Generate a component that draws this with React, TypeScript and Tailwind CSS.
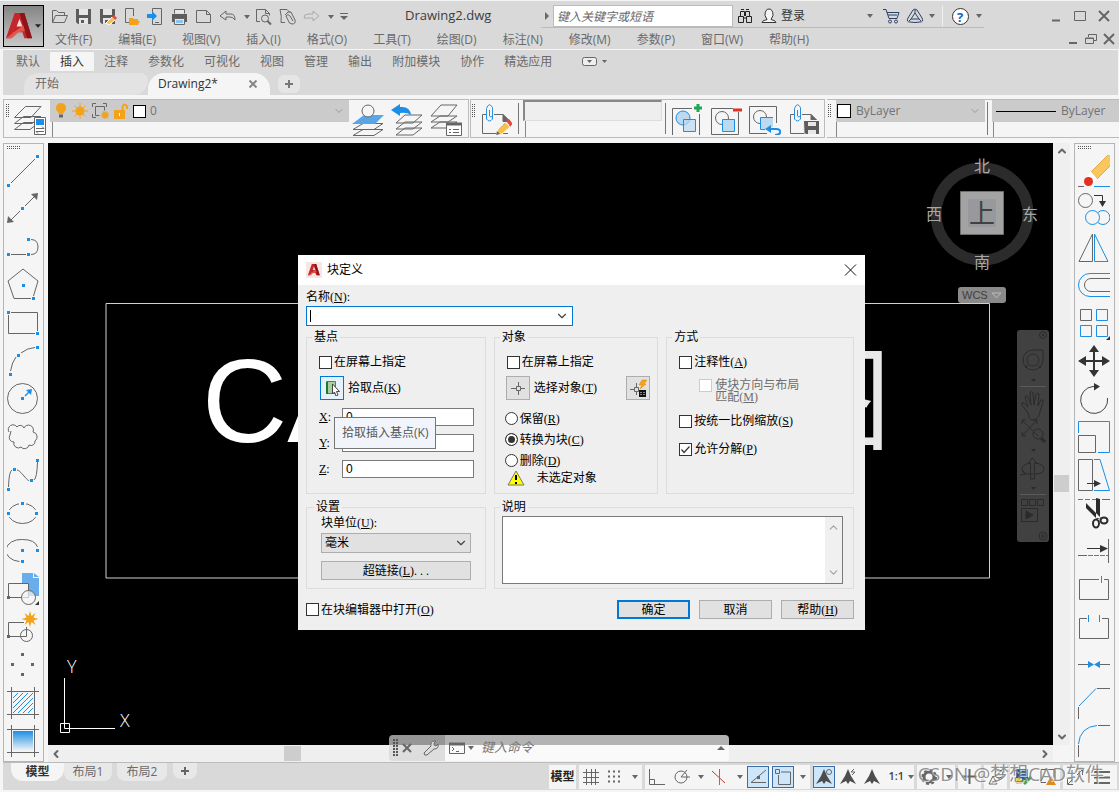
import type { ReactNode } from "react";
import { ChevronDown, ChevronLeft, ChevronRight, ChevronUp, X } from "lucide-react";

const GREY = "#666666";
const BLUE = "#1b8fe6";

type IconProps = { w?: number; h?: number; children: ReactNode; className?: string };

function Icon({ w = 32, h = 32, children, className }: IconProps) {
  return (
    <svg width={w} height={h} viewBox={`0 0 ${w} ${h}`} fill="none" stroke={GREY} className={`shrink-0 ${className ?? ""}`} aria-hidden="true">
      {children}
    </svg>
  );
}

function Dot({ x, y, c = BLUE }: { x: number; y: number; c?: string }) {
  return <rect x={x - 1} y={y - 1} width="3" height="3" fill={c} stroke="none" />;
}

function Caret() {
  return (
    <Icon w={7} h={4}>
      <path d="M1 0h6L4 4z" fill={GREY} stroke="none" />
    </Icon>
  );
}

function Grip({ vertical = false }: { vertical?: boolean }) {
  const cells = [0, 1, 2, 3, 4, 5, 6];
  return (
    <Icon w={vertical ? 4 : 14} h={vertical ? 14 : 4}>
      {cells.map((i) => (
        <g key={i} fill="#555" stroke="none">
          <rect x={vertical ? 0 : i * 2} y={vertical ? i * 2 : 0} width="1" height="1" />
          <rect x={vertical ? 2 : i * 2} y={vertical ? i * 2 : 2} width="1" height="1" />
        </g>
      ))}
    </Icon>
  );
}

function LogoA({ size }: { size: number }) {
  return (
    <svg width={size} height={size} viewBox="0 0 32 32" aria-hidden="true" className="shrink-0">
      <path d="M11 2h10l8 26h-8l-2-6-9 0-3 6H2z" fill="#c4262c" />
      <path d="M16 8l3 8h-6z" fill="#f6dcd8" />
      <path d="M2 28L21 14l3 6-9 2-7 6z" fill="#e2574c" />
      <path d="M16 2h5l8 26h-5z" fill="#8e1419" />
    </svg>
  );
}

/* quick access bar */

const floppy = (
  <>
    <path d="M1 1h15v15H3l-2-2z" fill="#5c5c5c" stroke="none" />
    <path d="M4 1h9v6H4zM4 10h9v6H4z" fill="#e6e6e6" stroke="none" />
    <path d="M6 12h3v3H6z" fill="#5c5c5c" stroke="none" />
  </>
);

const quick = [
  { name: "打开", art: <path d="M1.500 14.500V2.500h4l2 2h6v3M1.500 14.500l3-7h12l-3 7z" /> },
  { name: "保存", art: floppy },
  { name: "另存为", art: <>{floppy}<path d="M7 15l6-6 3 3-6 5z" fill="#f7c04e" stroke="#fff" /><path d="M13 9l2-2 3 3-2 2z" fill="#e5483c" stroke="none" /></> },
  { name: "从移动设备打开", art: <><path d="M10.500 8V.5h-8v14h4" /><path d="M6 17V10h4l1 1h4v2h2l-2 4z" fill="#f5a21b" stroke="none" /></> },
  { name: "保存到移动设备", art: <><path d="M5.500 5V.5h9v16h-9v-5M8 14.500h4" /><path d="M0 6h5V3l5 5-5 5v-3H0z" fill={BLUE} stroke="none" /></> },
  { name: "打印", art: <><path d="M1 6h15v8H1z" fill="#5c5c5c" stroke="none" /><path d="M3.500 5.500v-4h10v4M3.500 10.500h10v6h-10z" fill="#e8e8e8" /><path d="M5 12h7v3H5z" fill="#8cc4ef" stroke="none" /></> },
  { name: "新建", art: <path d="M1.500 2.500h10l4 4v8h-14zM11.500 2.500v4h4" /> },
  { name: "放弃", art: <path d="M1 8l6-5v3h5q4 0 4 6-2-3-5-3H7v3z" /> },
];

const quickMore = [
  { name: "打印预览", art: <><path d="M5 13.500H1.500v-12h9l4 4v2M10.500 1.500v4h4" /><circle cx="10" cy="10.500" r="3.500" /><path d="M12.500 13l3.500 3.500" strokeWidth="2" /></> },
  { name: "发布", art: <><path d="M6 14.500H2q1-6-1-13h7l3 3" /><path d="M6 7l3-3q4-1 4 2l3 6q1 4-3 4-3 0-4-4L7 8q2-3 4 0l3 5" /></> },
];

const menus = ["文件(F)", "编辑(E)", "视图(V)", "插入(I)", "格式(O)", "工具(T)", "绘图(D)", "标注(N)", "修改(M)", "参数(P)", "窗口(W)", "帮助(H)"];

function Header() {
  return (
    <header className="mt-px flex h-12 items-stretch bg-[#d9d9d9] pr-px">
      <button type="button" aria-label="应用程序菜单" className="mt-1 ml-[3px] flex h-[42px] w-[41px] shrink-0 items-center justify-between border border-black bg-linear-to-b from-[#858585] to-[#c8c8c8] pr-0.5">
        <LogoA size={31} />
        <svg width="7" height="4" viewBox="0 0 7 4" aria-hidden="true"><path d="M0 0h7L3.500 4z" fill="#222" /></svg>
      </button>
      <div className="flex min-w-0 flex-1 flex-col">
        <div className="flex h-[27px] items-center">
          <div className="ml-1 flex items-center pt-1">
            {quick.map((q) => (
              <button key={q.name} type="button" aria-label={q.name} className="grid w-6 place-items-center">
                <Icon w={18} h={18}>{q.art}</Icon>
              </button>
            ))}
            <span className="grid w-3 place-items-center"><Caret /></span>
            {quickMore.map((q) => (
              <button key={q.name} type="button" aria-label={q.name} className="grid w-6 place-items-center">
                <Icon w={18} h={18}>{q.art}</Icon>
              </button>
            ))}
            <button type="button" aria-label="重做" disabled className="grid w-6 place-items-center">
              <Icon w={18} h={18}><path d="M16 8l-6-5v3H5Q1 6 1 10h9v3z" stroke="#aaa" /></Icon>
            </button>
            <span className="grid w-3 place-items-center"><Caret /></span>
            <span className="grid w-4 place-items-center">
              <Icon w={8} h={7}><path d="M0 .5h8" /><path d="M0 3h8L4 7z" fill={GREY} stroke="none" /></Icon>
            </span>
          </div>
          <span className="ml-[53px] w-[136px] pt-0.5 text-[13px] text-[#3d3d3d]">Drawing2.dwg</span>
          <div className="flex h-full items-center border-b border-[#bbb] pt-1">
            <span className="grid w-3 place-items-center">
              <Icon w={4} h={8}><path d="M0 0v8l4-4z" fill={GREY} stroke="none" /></Icon>
            </span>
            <input aria-label="搜索" placeholder="键入关键字或短语" className="h-[22px] w-[180px] border border-[#bbb] bg-white px-[3px] text-xs italic outline-none placeholder:text-[#666]" />
            <button type="button" aria-label="查找" className="grid w-6 place-items-center">
              <Icon w={16} h={16}><path d="M1.500 8.500h5v6h-5zM9.500 8.500h5v6h-5zM3.500 8V3.500h4V8M8.500 8V3.500h4V8M4 1.500h3M9 1.500h3M6.500 10h3" stroke="#222" /></Icon>
            </button>
            <button type="button" className="flex items-center text-xs text-[#333]">
              <span className="grid w-6 place-items-center">
                <Icon w={16} h={16}><path d="M1 14.500q0-2 5-3l-2-4Q4 1 8 1t4 6.500l-2 4q5 1 5 3z" stroke="#333" fill="#f4f4f4" /></Icon>
              </span>
              登录
            </button>
            <span className="ml-14 grid w-4 place-items-center"><Caret /></span>
            <button type="button" aria-label="应用商店" className="grid w-7 place-items-center">
              <Icon w={18} h={16}><path d="M1 1.500h3l3 9h8l2-6H5M6 7h9" stroke="#2f3f66" /><circle cx="8" cy="13.500" r="1.500" stroke="#2f3f66" /><circle cx="14" cy="13.500" r="1.500" stroke="#2f3f66" /></Icon>
            </button>
            <button type="button" aria-label="保持连接" className="grid w-5 place-items-center">
              <Icon w={18} h={16}><path d="M7 2q2-2 4 0l5 8q2 4-2 4-5 1-10 0-4 0-2-4z" stroke="#2f3f66" /><path d="M9 5l4 6H5z" stroke="#2f3f66" /><path d="M9 2v3M3 13l2-2M15 13l-2-2" stroke="#2f3f66" /></Icon>
            </button>
            <span className="grid w-3 place-items-center"><Caret /></span>
            <span className="mx-[5px] h-5 w-px bg-[#f0f0f0]" />
            <button type="button" aria-label="帮助" className="grid w-6 place-items-center">
              <span className="grid size-[17px] place-items-center rounded-full border border-[#333] bg-white text-[13px] leading-4 font-bold text-[#1663b5]">?</span>
            </button>
            <span className="grid w-3 place-items-center"><Caret /></span>
          </div>
          <div className="ml-auto flex items-center pt-0.5 pr-0.5">
            <button type="button" aria-label="最小化" className="grid w-6 place-items-center"><Icon w={12} h={12}><path d="M2 10.500h8" strokeWidth="2" /></Icon></button>
            <button type="button" aria-label="最大化" className="grid w-6 place-items-center"><Icon w={12} h={12}><path d="M.5 1.500h11v9H.5z" /></Icon></button>
            <button type="button" aria-label="关闭" className="grid w-6 place-items-center"><Icon w={12} h={12}><path d="M1 1l10 10M11 1L1 11" strokeWidth="2" /></Icon></button>
          </div>
        </div>
        <nav className="flex h-[21px] items-center gap-0.5 text-xs text-[#6a6a6a]">
          {menus.map((m) => (
            <button key={m} type="button" className="px-3 pt-0.5 leading-5 whitespace-nowrap first:pl-[11px]">{m}</button>
          ))}
          <div className="ml-auto flex">
            <button type="button" aria-label="最小化图形" className="grid w-[18px] place-items-center"><Icon w={12} h={12}><path d="M2 10h8" strokeWidth="2" /></Icon></button>
            <button type="button" aria-label="还原图形" className="grid w-[18px] place-items-center"><Icon w={12} h={12}><path d="M3.500 4V1.500h8v6H9M.5 5h8v5.500h-8zM.5 5.500h8" /></Icon></button>
            <button type="button" aria-label="关闭图形" className="grid w-[18px] place-items-center"><Icon w={12} h={12}><path d="M1 1l10 10M11 1L1 11" strokeWidth="2" /></Icon></button>
          </div>
        </nav>
      </div>
    </header>
  );
}

const ribbonTabs = ["默认", "插入", "注释", "参数化", "可视化", "视图", "管理", "输出", "附加模块", "协作", "精选应用"];

function Ribbon() {
  return (
    <section className="mt-px mr-px ml-[3px] bg-[#d9d9d9] pt-px text-xs text-[#6a6a6a]">
      <div className="flex h-[21px] items-center pl-[3px]">
        {ribbonTabs.map((t) => (
          <button key={t} type="button" className={`h-[19px] px-2.5 leading-[19px] whitespace-nowrap ${t === "插入" ? "bg-[#f5f5f5] text-[#333]" : ""}`}>{t}</button>
        ))}
        <button type="button" aria-label="功能区选项" className="ml-5 flex items-center gap-1">
          <Icon w={16} h={9}><rect x=".5" y=".5" width="14" height="8" rx="2" fill="#eee" /><path d="M5 3h5L7.500 6z" fill={GREY} stroke="none" /></Icon>
          <Icon w={5} h={4}><path d="M0 0h5L2.500 3z" fill={GREY} stroke="none" /></Icon>
        </button>
      </div>
      <div className="flex h-[23px] items-end pl-[21px]">
        <button type="button" className="h-[22px] w-[124px] rounded-tl-2xl rounded-tr-lg rounded-br-2xl bg-[#e3e3e3] pl-[11px] text-left leading-[22px]">开始</button>
        <div className="flex h-[22px] w-[122px] items-center justify-between rounded-tl-2xl rounded-tr-2xl bg-[#f5f5f5] px-2.5 text-[#333]">
          <button type="button" className="leading-[22px]">Drawing2*</button>
          <button type="button" aria-label="关闭 Drawing2" className="grid size-3.5 place-items-center"><Icon w={8} h={8}><path d="M.5.5l7 7M7.500.5l-7 7" strokeWidth="2" stroke="#888" /></Icon></button>
        </div>
        <button type="button" aria-label="新图形" className="mb-0.5 ml-2 grid h-[18px] w-[22px] place-items-center rounded-md bg-[#e5e5e5]">
          <Icon w={8} h={8}><path d="M4 0v8M0 4h8" strokeWidth="2" stroke="#777" /></Icon>
        </button>
      </div>
    </section>
  );
}

/* upper toolbars */

const sheets = (
  <>
    <path d="M.5 26.500l9-7H25l-9 7zM.5 20.500l9-7H27l-9 7zM.5 14.500l11-11H27l-10 11z" fill="#f5f5f5" />
  </>
);

const clipboard = (
  <>
    <path d="M6 11.500H2.500v19H28M14 11.500h9l7 7V24M23 11.500v7h7" />
    <path d="M23 11v8h8z" fill={GREY} stroke="none" />
    <path d="M12.500 8v8q-3 4-6 0V5.500q2.500-7 6-1V13q-1.500 2-3 0V7" stroke="#2a8fdc" />
  </>
);

function ToolBtn({ name, children, className }: { name: string; children: ReactNode; className?: string }) {
  return (
    <button type="button" aria-label={name} className={`shrink-0 ${className ?? ""}`}>
      <Icon>{children}</Icon>
    </button>
  );
}

function Toolbars() {
  return (
    <section className="mt-1 ml-[3px] flex h-[39px] gap-px text-xs text-[#737373]">
      <div className="flex w-[466px] shrink-0 border border-[#bbb] pl-0.5">
        <div className="pt-1"><Grip vertical /></div>
        <ToolBtn name="图层特性" className="ml-1">
          {sheets}
          <path d="M20.500 14.500h11v17h-11z" fill="#fff" />
          <path d="M22 16h8v6h-8z" fill={BLUE} stroke="none" />
          <path d="M22 25.500h8l-2-2M30 28.500h-8l2 2" />
        </ToolBtn>
        <div className="ml-1 flex w-[299px] flex-col">
          <div className="flex h-[22px] items-center gap-1 bg-[#cbcbcb] px-1">
            <Icon w={14} h={16}><path d="M7 0a5 5 0 0 1 3 9l-1 2H5L4 9a5 5 0 0 1 3-9z" fill="#f5a21b" stroke="none" /><path d="M5 13h4" strokeWidth="3" /></Icon>
            <Icon w={16} h={16}><circle cx="8" cy="8" r="4.500" fill="#f5a21b" stroke="none" /><path d="M8 0v16M0 8h16M2.500 2.500l11 11M13.500 2.500l-11 11" stroke="#f5a21b" /></Icon>
            <Icon w={18} h={16}><path d="M3.500 3.500h9v4M3.500 3.500v9h4M.5 4V.5H4M11 .5h3.500V4M.5 11v3.500H4" /><circle cx="13" cy="12" r="3" fill="#f5a21b" stroke="#f5a21b" strokeDasharray="1 1" strokeWidth="2" /></Icon>
            <Icon w={15} h={16}><path d="M0 7h11v9H0z" fill="#f5a21b" stroke="none" /><path d="M8.500 7V3.500q2-4 4.500 0V6" stroke="#f5a21b" strokeWidth="2" /><path d="M5 10h1v3H5z" fill="#fff" stroke="none" /></Icon>
            <span className="size-[13px] shrink-0 border border-black bg-white" />
            <select aria-label="图层" className="min-w-0 flex-1 appearance-none bg-transparent text-xs text-[#737373] outline-none"><option>0</option></select>
            <ChevronDown size={12} color="#999" />
          </div>
          <div className="ml-0.5 flex-1 border-l border-[#888]" />
        </div>
        <div className="flex gap-[7px] pt-0.5 pl-[3px]">
          <ToolBtn name="置为当前图层">
            <path d="M1 31.500l10-6h20l-9 6zM1 25.500l10-6h20l-9 6z" fill="#f5f5f5" />
            <path d="M0 20l12-9h20l-9 9z" fill="#57a7e8" stroke="none" />
            <circle cx="16" cy="7" r="6" fill="#f5f5f5" />
          </ToolBtn>
          <ToolBtn name="上一个图层">
            <path d="M5 31l9-7h17l-9 7zM5 25l9-7h17l-9 7zM5 19l9-8h17l-9 8z" fill="#f5f5f5" />
            <path d="M0 6l9-6v3q10-1 11 8-4-3-11-2v3z" fill={BLUE} stroke="none" />
          </ToolBtn>
          <ToolBtn name="图层状态管理器">
            <path d="M1 24l9-6h17l-9 6zM1 18l9-6h17l-9 6zM1 12L11 1h16l-9 11z" fill="#f5f5f5" />
            <path d="M16.500 19.500h15v12h-15z" fill="#fff" />
            <path d="M16 20h16" strokeWidth="3" />
            <path d="M19 25.500h2m2 0h6M19 28.500h2m2 0h6" />
          </ToolBtn>
        </div>
      </div>
      <div className="flex w-[355px] shrink-0 border border-[#bbb] pl-px">
        <div className="pt-1"><Grip vertical /></div>
        <ToolBtn name="编辑属性" className="ml-1">
          {clipboard}
          <path d="M16 32l2-6 7-7 5 5-8 7z" fill="#f7c04e" stroke="#f5f5f5" />
          <path d="M16 32l1-4 3 3z" fill={GREY} stroke="none" />
          <path d="M26 18l3-2 4 5-3 2z" fill="#e5483c" stroke="none" />
        </ToolBtn>
        <div className="my-[3px] ml-1.5 w-[5px] border-l border-[#777]" />
        <div className="flex w-[139px] flex-col">
          <input aria-label="块名称" className="h-[21px] border border-t-2 border-l-2 border-[#ddd] border-t-[#888] border-l-[#888] bg-[#eee] px-1 outline-none" />
          <div className="ml-0.5 flex-1 border-l border-[#888]" />
        </div>
        <div className="my-[3px] ml-[3px] w-1.5 border-l border-[#777]" />
        <div className="flex gap-[7px]">
          <ToolBtn name="插入块">
            <path d="M21 5.500H1.500v27h27V11" />
            <circle cx="12" cy="15" r="7" fill="#bcd9f0" stroke={BLUE} />
            <path d="M12.500 16.500h12v12h-12z" fill="#bcd9f0" fillOpacity=".7" stroke={BLUE} />
            <path d="M27 1v8M23 5h8" stroke="#22a557" strokeWidth="3" />
          </ToolBtn>
          <ToolBtn name="移除块">
            <path d="M23 5.500H1.500v26h27V9" />
            <circle cx="12" cy="15" r="6.500" />
            <path d="M12.500 16.500h12v12h-12z" fill="#bcd9f0" stroke={BLUE} />
            <path d="M23 7h9" stroke="#e5301f" strokeWidth="3" />
          </ToolBtn>
          <ToolBtn name="重置块">
            <path d="M18 30.500H.5v-27h27V20" />
            <circle cx="11" cy="14" r="6.500" />
            <path d="M12 15h12v9l-7 2h-5z" fill="#bcd9f0" stroke="none" />
            <path d="M24 14.500H11.500v12H16" stroke={BLUE} />
            <path d="M19 26h8q5 0 4 4-1 2-5 2" stroke={BLUE} strokeWidth="2" />
            <path d="M16 26l6-4v8z" fill={BLUE} stroke="none" />
          </ToolBtn>
          <ToolBtn name="保存块">
            {clipboard}
            <path d="M15.500 17.500h16v14H18l-2-2z" fill="#5c5c5c" stroke="#f5f5f5" />
            <path d="M20 19h8v4h-8zM20 27h8v4h-8z" fill="#e6e6e6" stroke="none" />
          </ToolBtn>
        </div>
      </div>
      <div className="ml-px flex min-w-0 flex-1 border-y border-[#bbb]">
        <div className="pt-1 pl-px"><Grip vertical /></div>
        <div className="ml-1 flex w-[149px] shrink-0 flex-col">
          <div className="flex h-[22px] items-center gap-[5px] bg-[#cbcbcb] px-px pr-1">
            <span className="size-3.5 shrink-0 border border-black bg-white" />
            <select aria-label="颜色" className="min-w-0 flex-1 appearance-none bg-transparent text-xs text-[#737373] outline-none"><option>ByLayer</option></select>
            <ChevronDown size={12} color="#999" />
          </div>
          <div className="flex-1 border-l border-[#888]" />
        </div>
        <div className="my-0.5 ml-0.5 w-[5px] border-l border-[#777]" />
        <div className="flex min-w-0 flex-1 flex-col">
          <div className="flex h-[22px] items-center gap-[5px] bg-[#cbcbcb] pl-1">
            <span className="h-px w-[60px] shrink-0 bg-black" />
            <select aria-label="线型" className="min-w-0 flex-1 appearance-none bg-transparent text-xs text-[#737373] outline-none"><option>ByLayer</option></select>
          </div>
          <div className="ml-px flex-1 border-l border-[#888]" />
        </div>
      </div>
    </section>
  );
}

/* side toolbars: every tool is 32 wide and 38 high */

const drawTools: { name: string; art: ReactNode }[] = [
  { name: "直线", art: <><path d="M4 31L28 7" /><Dot x={1} y={33} /><Dot x={30} y={4} /></> },
  { name: "构造线", art: <><path d="M4 30l9-9M18 16l9-9" /><path d="M0 33l1-7 6 6zM31 3l-7 1 6 6z" fill={GREY} stroke="none" /><Dot x={15} y={18} /></> },
  { name: "多段线", art: <><path d="M4 26.500h15M24 11.500q7 0 7 7.500t-7 7.500" /><Dot x={21} y={11} /><Dot x={1} y={26} /><Dot x={21} y={26} /></> },
  { name: "多边形", art: <><path d="M24 32.500H7L1 15 16 3l15 12-4.500 15" /><Dot x={16} y={19} /><Dot x={26} y={32} /></> },
  { name: "矩形", art: <><path d="M4 8.500h26.500V27M1.500 11v18.500H28" /><Dot x={1} y={8} /><Dot x={30} y={29} /></> },
  { name: "圆弧", art: <><path d="M3.500 29Q5 20 9 15M14 11q6-5 14-5.500" /><Dot x={3} y={32} /><Dot x={11} y={13} /><Dot x={30} y={5} /></> },
  { name: "圆", art: <><circle cx="15.500" cy="18.500" r="15" /><path d="M18 16l5-5" stroke={BLUE} strokeWidth="1.500" /><path d="M25 9l-6 1 5 5z" fill={BLUE} stroke="none" /><Dot x={15} y={18} /></> },
  { name: "修订云线", art: <path d="M2 14a4.500 4.500 0 1 1 8-5 4 4 0 0 1 7 1 4.500 4.500 0 0 1 9 4 5 5 0 0 1 2 9 4 4 0 0 1-6 4 4.500 4.500 0 0 1-8 2 4.500 4.500 0 0 1-7-5 4.500 4.500 0 0 1-4-7l1-4" /> },
  { name: "样条曲线", art: <><path d="M1.500 31Q2 15 5 14M10 14q2 0 7 6t5 4M27 24q3-2 3.500-18" /><Dot x={1} y={33} /><Dot x={7} y={13} /><Dot x={24} y={24} /><Dot x={30} y={4} /></> },
  { name: "椭圆", art: <><ellipse cx="15.500" cy="19.500" rx="14" ry="10" /><path d="M12 9.500h7M1.500 16v7M29.500 16v7" stroke="#f5f5f5" strokeWidth="3" /><Dot x={15} y={9} /><Dot x={1} y={19} /><Dot x={29} y={19} /></> },
  { name: "椭圆弧", art: <><path d="M30.500 15Q28 7.500 15.500 7.500a15 11 0 0 0-3 22" /><Dot x={15} y={18} /><Dot x={30} y={18} /><Dot x={15} y={29} /></> },
  { name: "插入块", art: <><path d="M15 3h11v5h6v18H15z" fill="#69aeea" stroke="none" /><path d="M27 3l5 4h-5z" fill="#69aeea" stroke="none" /><path d="M1.500 13.500h20v14h-20z" fill="#f5f5f5" /><circle cx="21.500" cy="27.500" r="7" fill="#f5f5f5" fillOpacity=".7" /><Dot x={1} y={27} c={GREY} /><path d="M32 31v4h-4z" fill="#333" stroke="none" /></> },
  { name: "创建块", art: <><path d="M17 14.500H1.500v14h18V19" /><circle cx="19.500" cy="27.500" r="6" /><Dot x={1} y={28} c={GREY} /><path d="M23 3l1.500 5 4-3-2 4.500 5 1.500-5 1.500 2 4.500-4-3L23 19l-1.500-5-4 3 2-4.500-5-1.500 5-1.500-2-4.500 4 3z" fill="#f5a21b" stroke="none" /></> },
  { name: "点", art: <><Dot x={15} y={8} c={GREY} /><Dot x={5} y={18} c={GREY} /><Dot x={25} y={18} c={GREY} /><Dot x={15} y={28} c={GREY} /></> },
  { name: "图案填充", art: <><path d="M0 7.500h32M0 30.500h32M4.500 3v32M27.500 3v32" /><path d="M6 14l5-5M6 19L16 9M6 24L21 9M6 29L26 9M11 29l15-15M16 29l10-10M21 29l5-5" stroke={BLUE} /></> },
  { name: "渐变色", art: <><defs><linearGradient id="grad" x1="0" y1="0" x2="0" y2="1"><stop offset="0" stopColor="#1b8fe6" /><stop offset="1" stopColor="#f5f5f5" /></linearGradient></defs><path d="M6 9h20v20H6z" fill="url(#grad)" stroke="none" /><path d="M0 7.500h32M0 30.500h32M4.500 3v32M27.500 3v32" /></> },
];

const modifyTools: { name: string; art: ReactNode }[] = [
  { name: "删除", art: <><path d="M32 3v11L19 27l-6-7L30 3z" fill="#fbc65b" stroke="none" /><path d="M13 20l-4 5 6 6 4-4z" fill="#fff" stroke="none" /><circle cx="10.500" cy="29.500" r="4.500" fill="#e5301f" stroke="none" /><path d="M13 20L30 3M19 27l13-13" stroke="#e0a848" /><path d="M0 34.500h6" /><path d="M16 34.500h16" stroke={BLUE} /></> },
  { name: "复制", art: <><circle cx="7.500" cy="10.500" r="7" /><path d="M16 5.500h8.500V12" stroke="#333" /><path d="M21 11h7l-3.500 6z" fill="#333" stroke="none" /><circle cx="14.500" cy="27.500" r="7" stroke={BLUE} /><path d="M20 22.500a7 7 0 1 1 0 10" stroke={BLUE} /></> },
  { name: "镜像", art: <><path d="M14.500 6v27.500H1z" /><path d="M16.500 6v27.500H30z" stroke={BLUE} /></> },
  { name: "偏移", art: <><path d="M32 7.500H12a11.500 11.500 0 0 0 0 23h20" stroke={BLUE} /><path d="M32 12.500H13a6.500 6.500 0 0 0 0 13h19" /></> },
  { name: "阵列", art: <><path d="M2.500 5.500h11v11h-11z" /><path d="M18.500 5.500h11v11h-11zM2.500 21.500h11v11h-11zM18.500 21.500h11v11h-11z" stroke={BLUE} /><path d="M32 32v4h-4z" fill="#333" stroke="none" /></> },
  { name: "移动", art: <><path d="M16 8v22M5 19h22" stroke="#333" strokeWidth="2" /><path d="M16 3l5 7H11zM16 35l5-7H11zM0 19l8-5v10zM32 19l-8-5v10z" fill="#333" stroke="none" /></> },
  { name: "旋转", art: <><path d="M18 6.500h-3A13.500 13.500 0 1 0 29.500 18" stroke="#444" /><path d="M16 3l6 3.500-6 4z" fill="#333" stroke="none" /></> },
  { name: "缩放", art: <><path d="M.5 17.500h17v17H.5z" /><path d="M.5 15V3.500h31v31H20" stroke={BLUE} /></> },
  { name: "拉伸", art: <><path d="M.5 3.500h14v31H.5z" /><path d="M16 3.500h6L31.500 34.500H16" stroke={BLUE} /><path d="M9 27.500h8" stroke="#333" /><path d="M16 24l7 3.500-7 3.500z" fill="#333" stroke="none" /></> },
  { name: "修剪", art: <><path d="M0 5.500h18" stroke={BLUE} strokeDasharray="5 2" /><path d="M24 5.500h8" /><path d="M8 9v5l11 11 4-1zM18 4l4 1v19h-4z" fill="#2b2b2b" stroke="none" /><ellipse cx="18" cy="29.500" rx="3" ry="4" stroke="#2b2b2b" strokeWidth="2" /><ellipse cx="26" cy="26.500" rx="3.500" ry="3" stroke="#2b2b2b" strokeWidth="2" /></> },
  { name: "延伸", art: <><path d="M9 16.500h14" stroke="#333" /><path d="M22 13l8 3.500-8 4z" fill="#333" stroke="none" /><path d="M30.500 7v24M0 23.500h9" /><path d="M10 23.500h20" stroke={BLUE} strokeDasharray="5 1" /></> },
  { name: "打断于点", art: <><path d="M21 9.500H1.500v20h29v-20H26" /><path d="M23.500 6v7" stroke={BLUE} /></> },
  { name: "打断", art: <><path d="M9 10.500H1.500v20h29v-20H24" /><path d="M10.500 7v7M21.500 7v7" stroke={BLUE} /></> },
  { name: "合并", art: <><path d="M0 18.500h10M22 18.500h10" /><path d="M10 15l6 3.500-6 3.500zM22 15l-6 3.500 6 3.500z" fill={BLUE} stroke="none" /></> },
  { name: "倒角", art: <><path d="M1 22L18 4.500" stroke={BLUE} /><path d="M19 4.500h13M.5 23v12" /></> },
  { name: "圆角", art: <><path d="M.5 22Q2 5 19 3.500" stroke={BLUE} /><path d="M20 3.500h12M.5 23v12" /></> },
];

function SideTools({ label, tools }: { label: string; tools: { name: string; art: ReactNode }[] }) {
  return (
    <aside aria-label={label} className="flex w-[41px] shrink-0 flex-col border border-[#b5b5b5] pt-0.5 pl-[3px]">
      <div className="mb-0.5"><Grip /></div>
      {tools.map((t) => (
        <button key={t.name} type="button" aria-label={t.name} className="h-[38px] w-8 shrink-0">
          <Icon h={38}>{t.art}</Icon>
        </button>
      ))}
    </aside>
  );
}

/* block definition dialog */

function Key({ k }: { k: string }) {
  return <>(<u>{k}</u>)</>;
}

function Check({ label, k, checked, className }: { label: string; k?: string; checked?: boolean; className?: string }) {
  return (
    <label className={`flex h-[18px] items-center gap-0.5 whitespace-nowrap ${className ?? ""}`}>
      <span className="relative grid size-[13px] shrink-0">
        <input type="checkbox" defaultChecked={checked} className="peer size-[13px] appearance-none border border-[#333] bg-white" />
        <svg viewBox="0 0 13 13" className="pointer-events-none absolute inset-0 hidden peer-checked:block" aria-hidden="true">
          <path d="M2.500 6.500L5 9.500l5.500-6" fill="none" stroke="#333" strokeWidth="1.200" />
        </svg>
      </span>
      <span>{label}{k && <Key k={k} />}</span>
    </label>
  );
}

function Radio({ label, k, checked }: { label: string; k: string; checked?: boolean }) {
  return (
    <label className="flex h-[21px] items-center gap-0.5">
      <input type="radio" name="objects" defaultChecked={checked} className="-ml-0.5 size-[13px] appearance-none rounded-full border border-[#333] bg-white checked:bg-[#333] checked:shadow-[inset_0_0_0_2px_white]" />
      <span>{label}<Key k={k} /></span>
    </label>
  );
}

function Coord({ axis, value }: { axis: string; value: string }) {
  return (
    <label className="flex h-[18px] items-center">
      <span className="w-[23px]"><u>{axis}</u>:</span>
      <input defaultValue={value} className="h-[18px] w-[132px] border border-[#7a7a7a] bg-white px-[3px] font-['Liberation_Sans'] text-xs outline-none" />
    </label>
  );
}

const box = "border border-[#dcdcdc]";
const legend = "px-0.5 leading-4";

function BlockDialog() {
  return (
    <div role="dialog" aria-label="块定义" className="absolute top-28 left-[250px] w-[567px] bg-[#efefef] pb-[11px] font-['Liberation_Serif','Noto_Sans_CJK_SC',serif] text-xs leading-4 text-black">
      <div className="flex h-[30px] items-center bg-white px-2 font-['Open_Sans','Noto_Sans_CJK_SC',sans-serif]">
        <span className="grid size-4 place-items-center bg-[#f6e6e4]"><LogoA size={14} /></span>
        <h1 className="ml-[5px] flex-1">块定义</h1>
        <button type="button" aria-label="关闭"><Icon w={13} h={12}><path d="M1 .5l11 11M12 .5l-11 11" stroke="#111" /></Icon></button>
      </div>
      <div className="pt-1 pr-[11px] pl-2">
        <label htmlFor="block-name">名称<Key k="N" />:</label>
        <div className="mt-px flex h-5 w-[267px] items-center border border-[#0078d7] bg-white px-[3px]">
          <span className="h-3 w-px bg-black" />
          <input id="block-name" className="min-w-0 flex-1 outline-none" />
          <ChevronDown size={14} color="#444" strokeWidth={2} />
        </div>

        <div className="mt-[3px] grid grid-cols-[180fr_165fr_188fr] gap-2">
          <fieldset className={`${box} h-[165px] pl-3`}>
            <legend className={`${legend} -ml-[7px]`}>基点</legend>
            <Check label="在屏幕上指定" className="mt-2" />
            <div className="mt-[5px] flex items-center gap-1">
              <button type="button" aria-labelledby="pick-point" className="ml-px grid size-6 place-items-center border border-[#0078d7] bg-[#e5f1fb]">
                <Icon w={16} h={16}><path d="M2.500 1.500h9v12h-9z" fill="#a9cf9b" stroke="#3f8d4a" /><path d="M3 2v12" stroke="#1c7a30" strokeWidth="2" /><path d="M8.500 4v10l2-2 1.500 4 2-1-1.500-3.500h3z" fill="#fff" stroke="#444" /></Icon>
              </button>
              <span id="pick-point">拾取点<Key k="K" /></span>
            </div>
            <div className="mt-2 flex flex-col gap-2">
              <Coord axis="X" value="0" />
              <Coord axis="Y" value="0" />
              <Coord axis="Z" value="0" />
            </div>
          </fieldset>
          <fieldset className={`${box} pl-3`}>
            <legend className={`${legend} -ml-[7px]`}>对象</legend>
            <Check label="在屏幕上指定" className="mt-2" />
            <div className="mt-[5px] flex items-center gap-1">
              <button type="button" aria-labelledby="select-objects" className="-ml-px grid size-6 place-items-center border border-[#adadad] bg-[#e1e1e1]">
                <Icon w={14} h={14}><path d="M0 7.500h5M10 7.500h4M7.500 1v4M7.500 10v4M5.500 5.500h4v4h-4z" /></Icon>
              </button>
              <span id="select-objects" className="flex-1">选择对象<Key k="T" /></span>
              <button type="button" aria-label="快速选择" className="mr-[7px] grid size-6 place-items-center border border-[#adadad] bg-[#e1e1e1]">
                <Icon w={18} h={18}><path d="M1 10.500h4M7.500 4v4M5.500 8.500h4v4h-4zM7.500 13v3" /><path d="M13 1h5l-3 4h2l-6 5 2-4h-3z" fill="#f5a21b" stroke="#d98a10" strokeWidth=".5" /><path d="M10 11h7v7h-7z" fill="#111" stroke="none" /><path d="M11.500 13.500h1m2 0h1m-4 2h1m2 0h1" stroke="#fff" /></Icon>
              </button>
            </div>
            <div className="mt-2">
              <Radio label="保留" k="R" />
              <Radio label="转换为块" k="C" checked />
              <Radio label="删除" k="D" />
            </div>
            <p className="flex h-3.5 items-center gap-3">
              <Icon w={18} h={16}><path d="M9 1l8 14H1z" fill="#ffff00" stroke="#777" /><path d="M9 5v5M9 12v2" stroke="#000" strokeWidth="2" /></Icon>
              未选定对象
            </p>
          </fieldset>
          <fieldset className={`${box} pl-3`}>
            <legend className={`${legend} -ml-[7px]`}>方式</legend>
            <Check label="注释性" k="A" className="mt-2" />
            <label className="mt-2 ml-5 flex items-start gap-[3px] leading-3 text-[#6d6d6d]">
              <input type="checkbox" disabled className="size-[13px] shrink-0 appearance-none border border-[#ccc] bg-white" />
              <span>使块方向与布局<br />匹配<Key k="M" /></span>
            </label>
            <Check label="按统一比例缩放" k="S" className="mt-[9px]" />
            <Check label="允许分解" k="P" checked className="mt-2.5" />
          </fieldset>
        </div>

        <div className="mt-[5px] grid grid-cols-[180fr_361fr] gap-2">
          <fieldset className={`${box} flex h-[90px] flex-col px-3.5`}>
            <legend className={`${legend} -ml-[7px]`}>设置</legend>
            <label htmlFor="units">块单位<Key k="U" />:</label>
            <div className="relative mt-0.5 h-5">
              <select id="units" className="h-5 w-full appearance-none border border-[#adadad] bg-[#e1e1e1] px-[3px] outline-none"><option>毫米</option></select>
              <ChevronDown size={14} strokeWidth={2} color="#444" className="pointer-events-none absolute top-[3px] right-[3px]" />
            </div>
            <button type="button" className="mt-2 h-[19px] w-full border border-[#adadad] bg-[#e1e1e1]">超链接<Key k="L" />. . .</button>
          </fieldset>
          <fieldset className={`${box} pr-2.5 pl-[7px]`}>
            <legend className={`${legend} -ml-0.5`}>说明</legend>
            <div className="relative">
              <textarea aria-label="说明" className="mt-px block h-[68px] w-full resize-none border border-[#7a7a7a] bg-white pr-5 outline-none" />
              <div className="pointer-events-none absolute inset-y-px right-px flex w-[17px] flex-col items-center justify-between bg-[#f0f0f0] py-1 text-[#a0a0a0]">
                <ChevronUp size={13} />
                <ChevronDown size={13} />
              </div>
            </div>
          </fieldset>
        </div>

        <div className="mt-[11px] flex items-center justify-between">
          <Check label="在块编辑器中打开" k="O" />
          <div className="flex gap-[9px]">
            <button type="button" className="h-[19px] w-[73px] border-2 border-[#0078d7] bg-[#e1e1e1] leading-3">确定</button>
            <button type="button" className="h-[19px] w-[73px] border border-[#adadad] bg-[#e1e1e1] leading-3">取消</button>
            <button type="button" className="h-[19px] w-[73px] border border-[#adadad] bg-[#e1e1e1] leading-3">帮助<Key k="H" /></button>
          </div>
        </div>
      </div>
      <div role="tooltip" className="absolute top-[162px] left-9 border border-[#767676] bg-[#f1f4fa] px-[7px] py-1.5 font-['Open_Sans','Noto_Sans_CJK_SC',sans-serif] leading-[18px] whitespace-nowrap text-[#575757]">
        拾取插入基点(K)
      </div>
    </div>
  );
}

/* model space */

function ViewCube() {
  return (
    <svg width="114" height="156" viewBox="0 -6 114 156" className="absolute top-[7px] right-[14px]" fontFamily="'Noto Sans CJK SC', sans-serif" aria-label="ViewCube">
      <circle cx="57" cy="58" r="46" fill="none" stroke="#2b2b2b" strokeWidth="11" />
      <path d="M35.500 35.500h43v43h-43z" fill="#a3a3a3" stroke="#6e6e6e" />
      <path d="M43 43h28v28H43z" fill="#97999c" />
      <g fill="#a8a8a8" fontSize="16" textAnchor="middle">
        <text x="57" y="16">北</text>
        <text x="57" y="112">南</text>
        <text x="9" y="64">西</text>
        <text x="105" y="64">东</text>
      </g>
      <text x="57" y="67" fontSize="26" fill="#3f4145" textAnchor="middle">上</text>
      <rect x="33" y="131" width="48" height="16" rx="3" fill="#8a8a8a" />
      <text x="37" y="143" fontSize="11" fill="#3f3f3f" fontFamily="'Liberation Sans', sans-serif">WCS</text>
      <path d="M67 137h9l-4.500 5z" fill="none" stroke="#bbb" />
    </svg>
  );
}

function NavBar() {
  return (
    <svg width="32" height="212" viewBox="0 0 32 212" className="absolute top-[187px] right-1" fill="none" stroke="#6a6a6a" aria-label="导航栏">
      <rect width="32" height="212" rx="3" fill="#414141" stroke="none" />
      <g stroke="#2b2b2b">
        <circle cx="26" cy="5" r="3.500" /><path d="M24.500 3.500l3 3m0-3l-3 3" />
        <path d="M6 30a10 10 0 0 1 10-10h10v10a10 10 0 0 1-20 0z" />
        <circle cx="16" cy="30" r="6" /><path d="M11 35l-3 3M21 35l3 3" />
        <path d="M14 49h5l-2.500 3zM14 119h5l-2.500 3zM14 157h5l-2.500 3z" fill="#2b2b2b" stroke="none" />
        <path d="M11 83L5 75q-1-3 2-2l4 4-3-10q1-3 3 0l3 8-1-12q2-3 3 0l1 12 2-11q2-2 3 0l-1 12 3-6q3-1 2 2l-4 13q-2 5-7 5-3 0-4-7z" />
        <path d="M5 90l16 16M20 90L5 106M5 94v-4h4M16 90h4v4M5 102v4h4" />
        <circle cx="21" cy="104" r="5" /><path d="M24 108l4 4" strokeWidth="3" />
        <path d="M15.500 128l4 5h-2v16h-4v-16h-2zM13 133Q4 135 5 140t11 4M18 133q9 1 9 6t-9 5M5 140l4 4-6 1" />
        <path d="M4.500 169.500h6v6h-6zM12.500 169.500h6v6h-6zM20.500 169.500h6v6h-6zM4.500 178.500h16v13h-16z" />
        <path d="M9 181l7 4-7 4z" fill="#2b2b2b" />
        <circle cx="26" cy="206" r="4" /><path d="M24 205h4M24 207h4" />
      </g>
      <path d="M3 56.500h26M3 164.500h26" stroke="#5a5a5a" />
    </svg>
  );
}

function CommandLine() {
  return (
    <div className="absolute -bottom-4 left-[341px] z-10 flex h-[26px] w-[340px]">
      <div className="flex w-14 items-center rounded-l-sm bg-[#d6d6d6]/70 pl-1">
        <Icon w={6} h={18}><path d="M1 0v18M4 0v18" stroke="#555" strokeWidth="2" strokeDasharray="2 1" /></Icon>
        <button type="button" aria-label="关闭命令行" className="grid w-4 place-items-center"><Icon w={10} h={10}><path d="M1 1l8 8M9 1L1 9" strokeWidth="2" /></Icon></button>
        <button type="button" aria-label="自定义" className="ml-2"><Icon w={16} h={16}><path d="M1 13l7-7q-1-4 3-5h2l-2 2v2l2 1 2-2q1 5-4 5l-7 6q-3 1-3-2z" fill="#ddd" /></Icon></button>
      </div>
      <div className="flex flex-1 items-center rounded-r-sm bg-white/70 px-1">
        <Icon w={16} h={13}><path d="M.5 1.500h15v10H.5z" /><path d="M0 2h16" strokeWidth="3" /><path d="M3 5l2 2-2 2M7 9.500h3" /></Icon>
        <span className="mx-0.5"><Caret /></span>
        <input aria-label="命令" placeholder="键入命令" className="ml-[5px] min-w-0 flex-1 bg-transparent text-[13px] italic outline-none placeholder:text-[#777]" />
        <Icon w={8} h={4}><path d="M0 4h8L4 0z" fill={GREY} stroke="none" /></Icon>
      </div>
    </div>
  );
}

function Drawing() {
  return (
    <svg className="absolute inset-0 h-full w-full" aria-label="模型空间" fill="none">
      <path d="M58 160.500h883.500v274.500H58z" stroke="#d0d0d0" />
      <text x="154" y="299" fontSize="118" fill="#fff" fontFamily="'Liberation Sans', sans-serif">CA</text>
      <text x="731" y="298" fontSize="112" fill="#e8e8e8" fontFamily="'Noto Sans CJK SC', sans-serif">图</text>
      <path d="M12.500 580.500h9v9h-9zM16.500 535v50.500H67" stroke="#fff" />
      <g fill="#fff" fontSize="18" fontFamily="'Open Sans', sans-serif" fontWeight="300">
        <text x="19" y="530">Y</text>
        <text x="72" y="584">X</text>
      </g>
    </svg>
  );
}

function Workspace() {
  return (
    <main className="mt-[5px] ml-[3px] flex min-h-0 flex-1 pr-1">
      <SideTools label="绘图" tools={drawTools} />
      <div className="ml-1 flex min-w-0 flex-1">
        <div className="flex min-w-0 flex-1 flex-col">
          <div className="relative min-h-[602px] flex-1 bg-black">
            <Drawing />
            <ViewCube />
            <NavBar />
            <BlockDialog />
            <CommandLine />
          </div>
          <div className="flex h-[17px] items-center justify-between bg-[#efefef] px-0.5">
            <ChevronLeft size={12} strokeWidth={4} color={GREY} />
            <span className="mr-auto ml-[222px] h-[15px] w-[17px] bg-[#cdcdcd]" />
            <ChevronRight size={12} strokeWidth={4} color={GREY} />
          </div>
        </div>
        <div className="mb-[17px] flex w-[17px] flex-col items-center justify-between bg-[#efefef] py-0.5">
          <ChevronUp size={12} strokeWidth={4} color={GREY} />
          <span className="mt-[318px] mb-auto h-[17px] w-[15px] bg-[#cdcdcd]" />
          <ChevronDown size={12} strokeWidth={4} color={GREY} />
        </div>
      </div>
      <div className="ml-1 flex"><SideTools label="修改" tools={modifyTools} /></div>
    </main>
  );
}

/* status bar */

function StatusBtn({ name, w, on, children }: { name: string; w: number; on?: boolean; children: ReactNode }) {
  return (
    <button type="button" aria-label={name} style={{ width: w }} className={`grid h-[22px] shrink-0 place-items-center ${on ? "border border-[#3b6ea8] bg-[#cde6f9]" : ""}`}>
      {children}
    </button>
  );
}

const annot = <path d="M9 1l3 7 5 8-6-3-2 3-2-3-6 3 5-8z" fill="#4d4d4d" stroke="none" />;

function StatusBar() {
  const group = "flex h-6 items-center bg-[#f5f5f5]";
  return (
    <footer className="relative mb-0.5 ml-[3px] flex h-7 items-center border-t border-[#bbb] bg-[#d9d9d9] pr-0.5 text-xs">
      <div className="flex items-start self-start pl-2 text-[#6a6a6a]">
        <button type="button" className="h-[18px] w-[53px] rounded-b-xl bg-[#f5f5f5] leading-[18px] font-bold text-[#333]">模型</button>
        <button type="button" className="h-[18px] w-12 rounded-b-lg bg-[#e8e8e8] leading-[18px]">布局1</button>
        <button type="button" className="ml-[5px] h-[18px] w-[50px] rounded-b-lg bg-[#e8e8e8] leading-[18px]">布局2</button>
        <button type="button" aria-label="新布局" className="ml-1.5 grid h-4 w-6 place-items-center rounded-b-lg bg-[#e8e8e8]"><Icon w={8} h={8}><path d="M4 0v8M0 4h8" strokeWidth="2" /></Icon></button>
      </div>
      <div className="ml-auto flex items-center gap-[3px]">
        <div className={group}><button type="button" className="w-[27px] font-bold whitespace-nowrap text-[#222]">模型</button></div>
        <div className={group}>
          <StatusBtn name="栅格" w={24}><Icon w={16} h={16}><path d="M0 3.500h16M0 8.500h16M0 13.500h16M3.500 0v16M8.500 0v16M12.500 0v16" /></Icon></StatusBtn>
          <StatusBtn name="捕捉" w={24}><Icon w={14} h={14}><path d="M0 1.500h14M0 6.500h14M0 11.500h14" strokeWidth="2" strokeDasharray="2 3" /></Icon></StatusBtn>
          <StatusBtn name="捕捉选项" w={15}><Caret /></StatusBtn>
        </div>
        <div className={group}>
          <StatusBtn name="正交" w={24}><Icon w={16} h={16}><path d="M.5 0v15.500H16M.5 10.500h5v5" /></Icon></StatusBtn>
          <StatusBtn name="极轴" w={25}><Icon w={16} h={16}><circle cx="7" cy="8" r="6" /><path d="M7 8h9M7 8l6-7" /></Icon></StatusBtn>
          <StatusBtn name="极轴选项" w={13}><Caret /></StatusBtn>
          <StatusBtn name="等轴测" w={24}><Icon w={14} h={16}><path d="M0 2l13 12" stroke="#c0392b" /><path d="M7.500 0v16" stroke="#3ba648" /></Icon></StatusBtn>
          <StatusBtn name="等轴测选项" w={16}><Caret /></StatusBtn>
          <StatusBtn name="对象捕捉追踪" w={22} on><Icon w={16} h={14}><path d="M16 0L1 12.500h15" /><Dot x={8} y={7} c={GREY} /></Icon></StatusBtn>
          <span className="w-[3px]" />
          <StatusBtn name="对象捕捉" w={22} on><Icon w={16} h={16}><path d="M6 3h9.500v12.500h-12V6M.5.5h4v4h-4z" /></Icon></StatusBtn>
          <StatusBtn name="捕捉设置" w={16}><Caret /></StatusBtn>
        </div>
        <div className={group}>
          <StatusBtn name="注释可见性" w={22} on><Icon w={18} h={17}>{annot}<circle cx="14" cy="4" r="2.500" /></Icon></StatusBtn>
          <StatusBtn name="自动缩放" w={26}><Icon w={18} h={17}>{annot}<path d="M15 1l-3 3h4l-3 3" /></Icon></StatusBtn>
          <StatusBtn name="注释" w={22}><Icon w={18} h={17}>{annot}</Icon></StatusBtn>
          <button type="button" className="flex w-[31px] items-center justify-end gap-[3px] text-[11px] font-semibold text-[#444]">1:1 <Caret /></button>
        </div>
        <div className={group}>
          <StatusBtn name="切换工作空间" w={24}><Icon w={16} h={16}><circle cx="8" cy="8" r="5" strokeWidth="3" /><circle cx="8" cy="8" r="7" strokeWidth="2" strokeDasharray="3 2.500" /></Icon></StatusBtn>
          <StatusBtn name="工作空间选项" w={14}><Caret /></StatusBtn>
        </div>
        <div className={group}><StatusBtn name="注释监视器" w={23}><Icon w={15} h={15}><path d="M7.500 0v15M0 7.500h15" strokeWidth="2" /></Icon></StatusBtn></div>
        <div className={group}><StatusBtn name="隔离对象" w={23}><Icon w={16} h={16}><circle cx="11" cy="5" r="4" /><path d="M1 15l4-8 4 8z" /></Icon></StatusBtn></div>
        <div className={group}>
          <StatusBtn name="硬件加速" w={26}><Icon w={18} h={18}><path d="M2 1h12v11H2z" fill="#245a9c" stroke="none" /><path d="M2 10h6v6H2z" fill="#f1c232" stroke="none" /><path d="M8 12l3 3 6-6" stroke="#3ba648" strokeWidth="3" /></Icon></StatusBtn>
          <StatusBtn name="系统变量" w={24}><Icon w={18} h={18}><path d="M2 1.500h13v8M2 1.500v13h5" /><path d="M12 8l5 9H7z" fill="#e08a1e" stroke="none" /></Icon></StatusBtn>
        </div>
        <div className={group}>
          <StatusBtn name="全屏显示" w={24}><Icon w={16} h={16}><path d="M10 6l5-5M10 .5h5.500V6M6 10l-5 5M.5 10v5.500H6" /></Icon></StatusBtn>
          <StatusBtn name="自定义状态栏" w={30}><Icon w={16} h={16}><path d="M0 3h16M0 8.500h16M0 14h16" strokeWidth="2" /></Icon></StatusBtn>
        </div>
      </div>
      <span className="pointer-events-none absolute right-[15px] bottom-1 text-[19px] leading-6 whitespace-nowrap text-[#777]/80 [text-shadow:1px_1px_0_rgba(255,255,255,0.7)]">CSDN @梦想CAD软件</span>
    </footer>
  );
}

export default function App() {
  return (
    <div className="flex min-h-screen flex-col overflow-hidden bg-[#f5f5f5] font-['Open_Sans','Noto_Sans_CJK_SC',sans-serif]">
      <Header />
      <Ribbon />
      <Toolbars />
      <Workspace />
      <StatusBar />
    </div>
  );
}
